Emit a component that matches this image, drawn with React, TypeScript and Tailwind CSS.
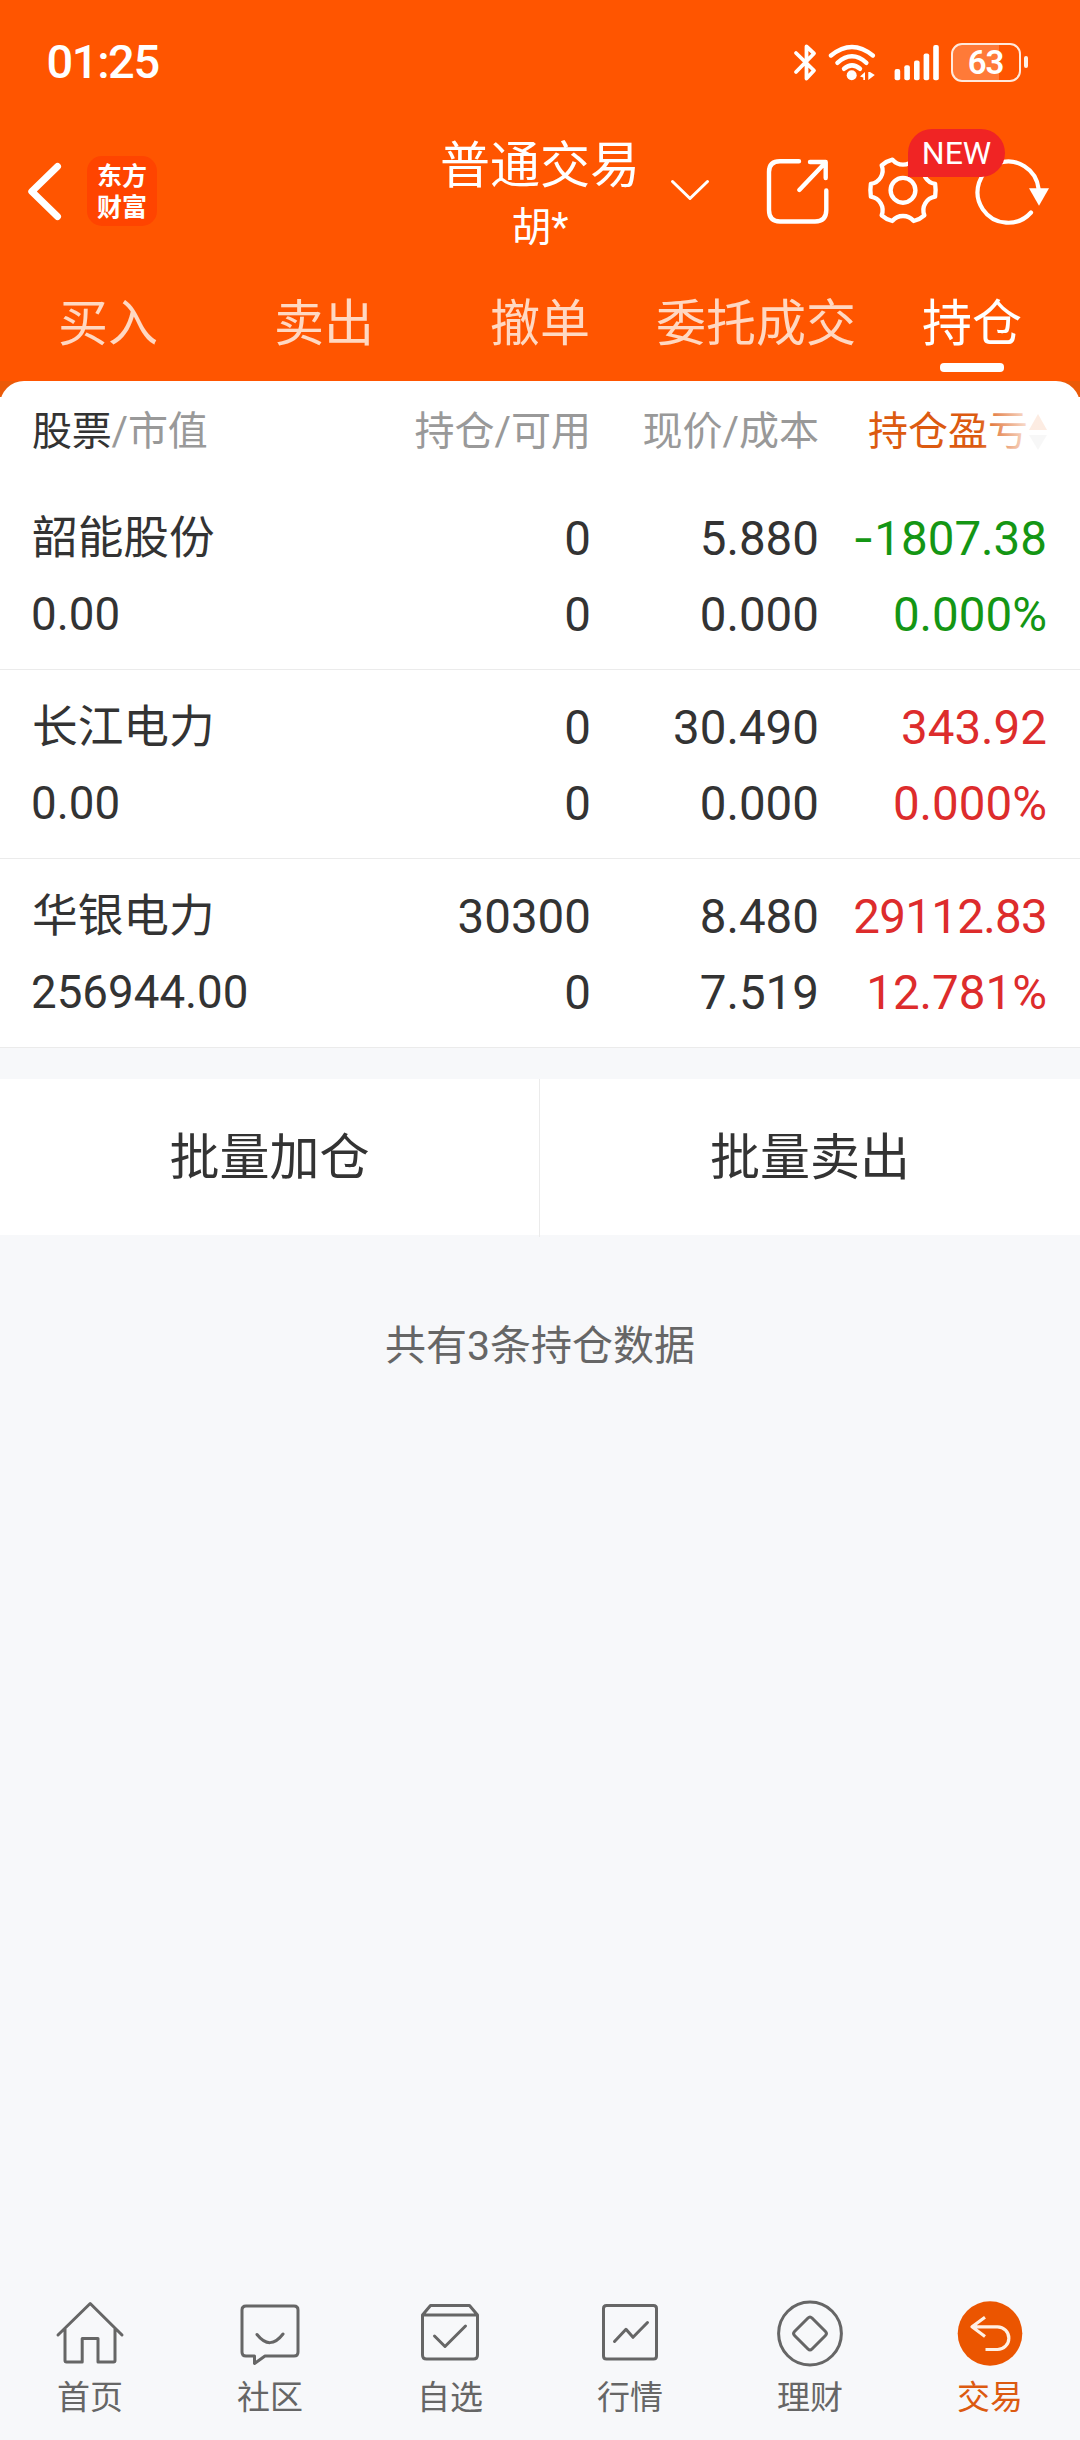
import React from "react";

const FONT = "font-['Roboto','Noto_Sans_CJK_SC',sans-serif]";

function StatusBar() {
  return (
    <div className="flex h-[124px] items-center justify-between pl-[46.5px] pr-[52px]">
      <span className="text-[47px] font-medium leading-[124px] tracking-[-1.4px]">01:25</span>
      <div className="flex items-center">
        <svg width="24" height="40" viewBox="793 40 24 40" fill="none" stroke="currentColor" strokeWidth="3.8" strokeLinecap="round" strokeLinejoin="round">
          <path d="M796 51L814 68.5L806.5 76.5V44.5L814 51.5L796 70" />
        </svg>
        <svg className="ml-[11px]" width="48" height="40" viewBox="828 40 48 40" fill="none" stroke="currentColor" strokeWidth="4.4" strokeLinecap="round">
          <path d="M831 53.5Q852 36.5 872.8 53.5" />
          <path d="M837.4 60.8Q852 47.8 866.4 60.8" />
          <path d="M844 66.8Q852 60 860 66.8" />
          <circle cx="851.7" cy="73.3" r="5" fill="currentColor" stroke="none" />
          <path d="M860 74.5L865 70V78H863.3V75.5ZM868.3 70H870L874.8 73L868.3 78Z" fill="currentColor" stroke="none" />
        </svg>
        <svg className="ml-[18px]" width="46" height="40" viewBox="894 40 46 40" fill="currentColor">
          <rect x="894.6" y="67" width="5.6" height="11.3" rx="2" />
          <rect x="904.3" y="63.3" width="5.6" height="15" rx="2" />
          <rect x="914" y="58.6" width="5.6" height="19.7" rx="2" />
          <rect x="923.6" y="51.6" width="5.6" height="26.7" rx="2" />
          <rect x="933.2" y="43" width="5.6" height="35.3" rx="2" />
        </svg>
        <div className="ml-[11px] flex items-center gap-[3px]">
          <div className="flex h-[39px] w-[70px] items-center justify-center rounded-[11px] border-[2.5px] border-[#ffe9dc] bg-linear-to-r from-[#ff7a38] from-70% to-transparent to-70% text-[33px] font-semibold leading-none tracking-[-1px]">
            63
          </div>
          <div className="h-[12px] w-[4.5px] rounded-[2px] bg-[#fff0e6]" />
        </div>
      </div>
    </div>
  );
}

function TitleBar() {
  return (
    <div className="flex h-[136px] items-start">
      <div className="flex w-[390px] items-center pl-[26px] pt-[32px]">
        <svg width="38" height="62" viewBox="26 160 38 62" fill="none" stroke="currentColor" strokeWidth="7" strokeLinecap="round" strokeLinejoin="round">
          <path d="M57.5 166.5L31.8 191.5L57.5 216.5" />
        </svg>
        <div className="ml-[23px] flex h-[70px] w-[70px] flex-col items-center rounded-[15px] bg-[#ff4400] pt-[3px] font-['Noto_Sans_CJK_SC',sans-serif] text-[25px] font-bold leading-[31px]">
          <span>东方</span>
          <span>财富</span>
        </div>
      </div>
      <div className="flex w-[300px] flex-col items-center">
        <span className="mt-[6px] text-[50px] leading-[72px]">普通交易</span>
        <span className="mt-[-4px] text-[40px] leading-[60px]">胡*</span>
      </div>
      <svg className="mt-[-24px] ml-[-21px]" width="411" height="136" viewBox="669 100 411 136" fill="none" stroke="currentColor" strokeLinecap="round" strokeLinejoin="round">
        <path d="M672.5 181.5L690 198.5L707.5 181.5" strokeWidth="3" />
        <g strokeWidth="4.4">
          <path d="M799 161.3H780Q769 161.3 769 172V210Q769 221.5 780 221.5H815Q826.3 221.5 826.3 210V190.5" />
          <path d="M799.3 190L825 163M810 162H825.7V178" />
          <path transform="translate(903 190.3) scale(0.98)" d="M32.8 -6.5Q33.8 0 32.8 6.5A14 14 0 0 0 21.8 25.5Q17 29.8 10.8 31.3A14 14 0 0 0 -10.8 31.3Q-17 29.8 -21.8 25.5A14 14 0 0 0 -32.8 6.5Q-33.8 0 -32.8 -6.5A14 14 0 0 0 -21.8 -25.5Q-17 -29.8 -10.8 -31.3A14 14 0 0 0 10.8 -31.3Q17 -29.8 21.8 -25.5A14 14 0 0 0 32.8 -6.5Z" />
          <circle cx="903" cy="190.3" r="12.4" />
          <path d="M1031 212.5A30.6 30.6 0 1 1 1038.6 189" strokeWidth="4.2" />
        </g>
        <path d="M1029 188.3H1049L1039 205.8Z" fill="currentColor" stroke="none" />
      </svg>
    </div>
  );
}

const tabs = ["买入", "卖出", "撤单", "委托成交", "持仓"];

function Tabs() {
  return (
    <div className="grid h-[121px] grid-cols-5">
      {tabs.map((t) => {
        const active = t === "持仓";
        return (
          <div key={t} className="flex flex-col items-center">
            <span className={"mt-[28px] text-[50px] leading-[72px] " + (active ? "text-white" : "text-[#ffd8c2]")}>{t}</span>
            {active && <span className="mt-[3px] h-[9px] w-[64px] rounded-[4px] bg-white" />}
          </div>
        );
      })}
    </div>
  );
}

type Holding = {
  name: string;
  value: string;
  qty: string;
  avail: string;
  price: string;
  cost: string;
  profit: string;
  pct: string;
  up: boolean;
};

const holdings: Holding[] = [
  { name: "韶能股份", value: "0.00", qty: "0", avail: "0", price: "5.880", cost: "0.000", profit: "-1807.38", pct: "0.000%", up: false },
  { name: "长江电力", value: "0.00", qty: "0", avail: "0", price: "30.490", cost: "0.000", profit: "343.92", pct: "0.000%", up: true },
  { name: "华银电力", value: "256944.00", qty: "30300", avail: "0", price: "8.480", cost: "7.519", profit: "29112.83", pct: "12.781%", up: true },
];

function TableHead() {
  return (
    <div className="grid h-[100px] grid-cols-[331px_228px_228px_229px] px-8 text-[40px] leading-[102px] text-[#999]">
      <div className="tracking-[-0.2px]">
        <span className="text-[#333]">股票</span>/市值
      </div>
      <div className="text-right">持仓/可用</div>
      <div className="text-right">现价/成本</div>
      <div className="relative flex h-[102px] items-center justify-end text-[#dc5a10]">
        <span>持仓盈亏</span>
        <svg width="20" height="38" viewBox="0 0 20 38">
          <path d="M10 1L19 17H1Z" fill="#f0813f" />
          <path d="M1 22H19L10 37Z" fill="#ccc" />
        </svg>
        <div className="absolute inset-y-0 right-0 w-[70px] bg-linear-to-r from-transparent to-white/85 to-75%" />
      </div>
    </div>
  );
}

function Row({ h }: { h: Holding }) {
  const negative = h.profit.startsWith("-");
  return (
    <div className="grid h-[189px] grid-cols-[331px_228px_228px_228px] border-b border-[#ebebeb] px-8 pt-[20px] text-[47.5px] leading-[76px] text-[#333]">
      <div className="flex flex-col text-[45.7px]">
        <span className="h-[76px]">{h.name}</span>
        <span className="ml-[-1px] h-[76px]">{h.value}</span>
      </div>
      <div className="flex flex-col text-right">
        <span>{h.qty}</span>
        <span>{h.avail}</span>
      </div>
      <div className="flex flex-col text-right">
        <span>{h.price}</span>
        <span>{h.cost}</span>
      </div>
      <div className={"flex flex-col text-right " + (h.up ? "text-[#dd2c2c]" : "text-[#149614]")}>
        <span className={h.profit.length > 7 && !negative ? "tracking-[-0.7px]" : ""}>
          {negative && <span className="font-['Inter',sans-serif] leading-none">-</span>}
          {negative ? h.profit.slice(1) : h.profit}
        </span>
        <span>{h.pct}</span>
      </div>
    </div>
  );
}

const nav = [
  { label: "首页", icon: <path d="M18 34.5L50.2 3L82 34.5M25 28.5V60Q25 61.5 26.5 61.5H42.2V38H58V61.5H73.5Q75 61.5 75 60V28.5" /> },
  { label: "社区", icon: <path d="M26 5.5H74Q78 5.5 78 9.5V51.5Q78 55.5 74 55.5H45L34.5 63V55.5H26Q22 55.5 22 51.5V9.5Q22 5.5 26 5.5ZM37 34Q50 50.5 63 33.5" /> },
  { label: "自选", icon: <path d="M22.5 14.5L30.5 5H69.5L77.5 14.5V54.5Q77.5 58.5 73.5 58.5H26.5Q22.5 58.5 22.5 54.5ZM22.5 14.5H77.5M34.5 35.5L45 46L65.5 25.5" /> },
  { label: "行情", icon: <path d="M26.5 5H73.5Q76.5 5 76.5 8V55.5Q76.5 58.5 73.5 58.5H26.5Q23.5 58.5 23.5 55.5V8Q23.5 5 26.5 5ZM34.5 41L46 28.8L53 36.8L67.5 22" /> },
  {
    label: "理财",
    icon: (
      <>
        <circle cx="50" cy="33" r="31.4" />
        <path d="M48 17.5Q50 15.5 52 17.5L65.5 31Q67.5 33 65.5 35L52 48.5Q50 50.5 48 48.5L34.5 35Q32.5 33 34.5 31Z" />
      </>
    ),
  },
  {
    label: "交易",
    icon: (
      <>
        <circle cx="50" cy="33" r="32.3" fill="#eb5500" stroke="none" />
        <path d="M45 16.8L32 26.3L45 36M33 26.3H57.5A11.3 11.3 0 0 1 57.5 49H45.5" stroke="#fff0e4" strokeLinecap="butt" strokeWidth="3.2" />
      </>
    ),
  },
];

function BottomNav() {
  return (
    <div className="grid h-[150px] grid-cols-6">
      {nav.map((n) => (
        <div key={n.label} className={"flex flex-col items-center pt-[8px] " + (n.label === "交易" ? "text-[#dc5a10]" : "text-[#666]")}>
          <svg width="80" height="70" viewBox="10 -2.5 80 70" fill="none" stroke="currentColor" strokeWidth="3" strokeLinejoin="round" strokeLinecap="round">
            {n.icon}
          </svg>
          <span className="mt-[7px] text-[33px] leading-[46px]">{n.label}</span>
        </div>
      ))}
    </div>
  );
}

export default function App() {
  return (
    <div className={"flex h-[2440px] w-[1080px] flex-col overflow-hidden bg-[#f7f8fa] " + FONT}>
      <header className="relative bg-[#ff5500] text-white">
        <StatusBar />
        <TitleBar />
        <Tabs />
        <div className="absolute left-[908px] top-[129px] flex h-[48px] w-[97px] items-center justify-center rounded-[24px] rounded-bl-none bg-[#f02424] text-[32px] leading-none">
          NEW
        </div>
      </header>
      <div className="bg-linear-to-b from-[#eb5a08] from-[16px] to-white to-[16px]">
        <section className="rounded-t-[24px] bg-white">
          <TableHead />
          {holdings.map((h) => (
            <Row key={h.name} h={h} />
          ))}
        </section>
      </div>
      <div className="mt-[31px] grid h-[156px] grid-cols-2 bg-white text-center text-[50px] leading-[158px] text-[#333]">
        <button className="border-r border-[#ebebeb]">批量加仓</button>
        <button>批量卖出</button>
      </div>
      <p className="mt-[81px] text-center text-[41px] leading-[60px] text-[#666]">共有3条持仓数据</p>
      <div className="flex-1" />
      <BottomNav />
    </div>
  );
}
